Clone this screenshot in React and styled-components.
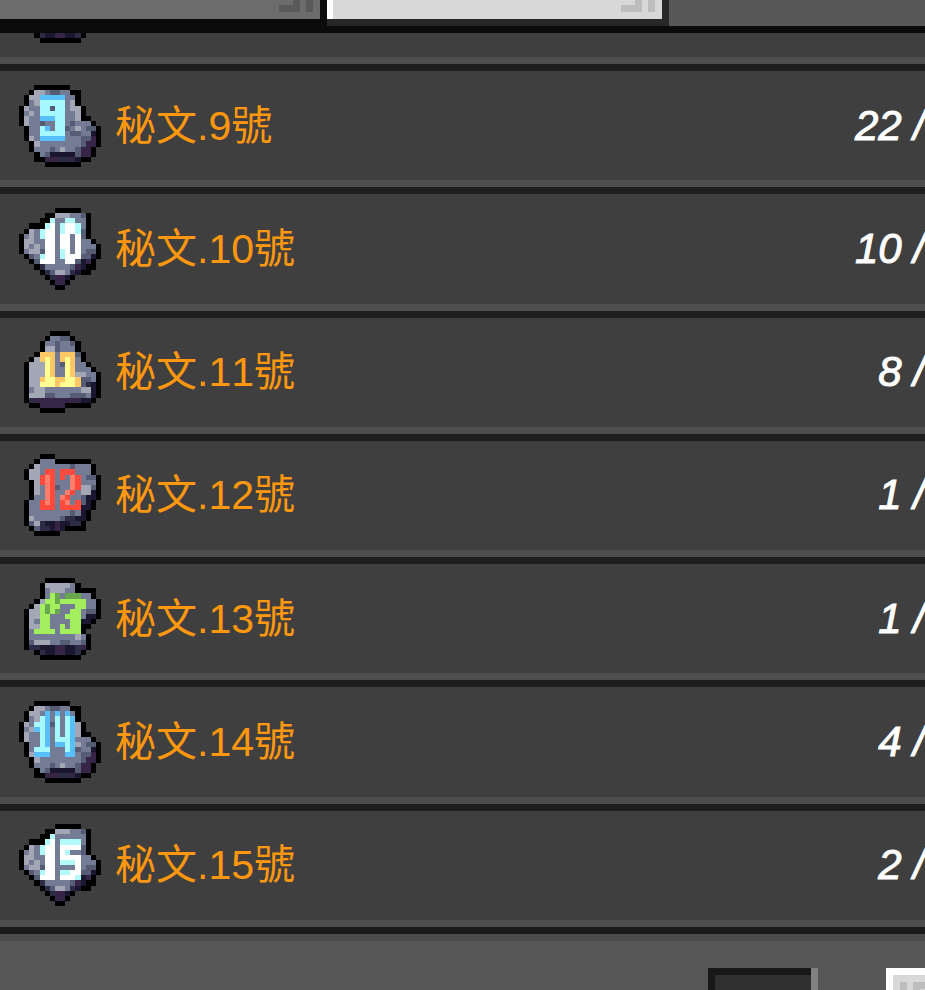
import React from "react";
import styled, { createGlobalStyle } from "styled-components";

const GlobalStyle = createGlobalStyle`
  * {
    box-sizing: border-box;
  }

  body {
    margin: 0;
    background: #575757;
    font-family: "Liberation Sans", "Noto Sans CJK TC", sans-serif;
    font-kerning: none;
  }
`;

const Page = styled.div`
  width: 100%;
  height: 100vh;
  display: flex;
  flex-direction: column;
  overflow: hidden;
`;

const TabBar = styled.div`
  flex: none;
  height: 33px;
  display: flex;
  align-items: flex-start;
  background: #585858;
  border-bottom: 7px solid #0b0b0b;
`;

const Tab = styled.button`
  flex: none;
  width: ${(props) => (props.$active ? "342px" : "327px")};
  height: 26px;
  padding: 0 7px 7px 0;
  display: flex;
  justify-content: flex-end;
  align-items: flex-end;
  border: solid ${(props) => (props.$active ? "#272727" : "#0b0b0b")};
  border-width: 0 7px 7px 0;
  background: ${(props) => (props.$active ? "#d8d8d8" : "#6c6c6c")};
  color: ${(props) => (props.$active ? "#bdbdbd" : "#595959")};
  box-shadow: ${(props) => (props.$active ? "inset 6px 0 #ffffff" : "none")};
`;

const List = styled.ul`
  flex: 1;
  min-height: 0;
  margin: 0;
  padding: 0;
  display: flex;
  flex-direction: column;
  list-style: none;
  background: #3f3f3f;
`;

const Peek = styled.li`
  flex: none;
  height: 24px;
  padding: 0 19px 14px;
  display: flex;
  align-items: flex-end;
  overflow: hidden;
`;

const Item = styled.li`
  flex: 1;
  padding: 7px 0 0 19px;
  display: flex;
  align-items: center;
  border-top: 7px solid #4e4e4e;
  box-shadow: inset 0 7px #1e1e1e;
`;

const Icon = styled.svg`
  flex: none;
  display: block;
  width: 82px;
  height: 82px;
`;

const Name = styled.span`
  flex: 1;
  margin-left: 14px;
  font-size: 41px;
  line-height: 56px;
  color: #ff980e;
`;

const Amount = styled.span`
  flex: none;
  font-size: 42px;
  line-height: 56px;
  font-style: italic;
  white-space: pre;
  color: #ffffff;
  -webkit-text-stroke: 1px #ffffff;
`;

const Footer = styled.footer`
  flex: none;
  height: 70px;
  padding-top: 41px;
  display: flex;
  justify-content: flex-end;
  gap: 68px;
  border-top: 7px solid #4e4e4e;
  box-shadow: inset 0 7px #1a1a1a, inset 0 14px #4b4b4b;
  overflow: hidden;
`;

const SearchInput = styled.input`
  width: 103px;
  height: 56px;
  flex: none;
  margin-right: 7px;
  border: solid #181818;
  border-width: 7px 0 7px 7px;
  border-radius: 0;
  background: #303030;
  color: #ffffff;
  box-shadow: 7px 0 #818181;
  outline: none;
`;

const FooterButton = styled.button`
  flex: none;
  width: 110px;
  height: 56px;
  margin-right: -71px;
  padding: 7px;
  display: flex;
  align-items: flex-start;
  border: 7px solid #ffffff;
  background: #d8d8d8;
  color: #bdbdbd;
`;

const COLORS = {
  K: "#000000",
  A: "#a3a7b5",
  m: "#737b95",
  d: "#565c73",
  s: "#2c2c45",
  n: "#1c1730",
  p: "#372548",
  B: "#57bffa",
  C: "#a6f8ff",
  W: "#ffffff",
  c: "#b2fafa",
  Y: "#ffff93",
  O: "#ffc766",
  R: "#ff4b3e",
  r: "#ff7d6b",
  G: "#a2ee5c",
  g: "#68a74d",
};

const STONES = {
  round: [
    "...KKKKKKK......",
    "..KAAmddmmKK....",
    ".KAAmmmmmmmK....",
    ".KmAmmmmmmAK....",
    "KAmmmmdmmmAAK...",
    "KmAmmmmmmmmAK...",
    "KAmmmmmmmmmAKK..",
    "KAmmdmmmmmdmmmK.",
    ".KmmmmmmmdmAmddK",
    ".KmmmmmmmmddmmnK",
    ".KAmmmmmmmmmddpK",
    "..KAmmmmmmmmdppK",
    "..KmmmdmAmmdppK.",
    "...KmdnnnnndppK.",
    "...KKpppsspnKK..",
    ".....KKKKKKK....",
  ],
  diamond: [
    ".......KKKKK....",
    ".....KKAAAmmdK..",
    "....KKmmmmmmmK..",
    "..KKKmdmmmmmmK..",
    ".KAmmmmmmmmmdK..",
    "KmAmdmmmmmmmdK..",
    "KAAmmmmmmmmmmmK.",
    "KAmAmmmmmmmmmmmK",
    "KmAAdmmmmmmmmddK",
    ".KdmmmmmmmmmddnK",
    "..KdmmmmmmmdnpK.",
    "...KsmmmmmdpnKK.",
    "....KsdAAmsnKK..",
    ".....KsppnK.....",
    "......KppK......",
    ".......KK.......",
  ],
  peak: [
    "......KKKK......",
    ".....KmmddK.....",
    "....KmmdmmdK....",
    "....KAAdmmmK....",
    "...KAAmmdmmdK...",
    "..KAAAAmdmmmK...",
    ".KAAAAAmdmmmmK..",
    ".KAAAmmmmmmmmmK.",
    ".KAAAmmmmmmAAmmK",
    ".KAAmmmmmmmmddmK",
    ".KAAmmmmmmmmdsnK",
    ".KmAAmmmmmmmAAnK",
    ".KAAAddmmmdddmnK",
    ".KspppppppppnnK.",
    "..KKpppppKKKKK..",
    "....KKKKK.......",
  ],
  slab: [
    "....KKK.........",
    "...KmmmKKKKKKK..",
    "..KAmmmmmmdmmmK.",
    ".KAAmmmmmmmmmmK.",
    ".KAAmmmmmmmmmddK",
    "..KAmmmmmmmmmmmK",
    "..KAmmmdmmmmAAdK",
    "..KAmmmmmmmmAAnK",
    "..KmmmmmmmmmdnnK",
    ".KmmmmmmmmmmdnK.",
    ".KmmmmmmmmmmnnK.",
    ".KmmmmmmmmdmnK..",
    ".KAmmmmmdssnnK..",
    ".KdAsnnpnnssK...",
    "..KdssnpnKKKK...",
    "...KKKKK........",
  ],
  boot: [
    ".....KKKKKK.....",
    "....KAAAAAmK....",
    "....KmAAAmmKKKK.",
    "....KmmAmmmmmmK.",
    "...KAAmmmmmmmmmK",
    "..KAAmmmmmmmmmmK",
    ".KAAmmmmmmmmmddK",
    ".KAAmmmmmmmmmnnK",
    ".KAmmmmmmmmmnnK.",
    ".KAAmmmmmmmmKK..",
    ".KmAmmmmmmmmK...",
    ".KmmmmmmmmmAmK..",
    ".KdAAAmmddmmdK..",
    ".KssnnnppnnspK..",
    "...KsnnppnnsK...",
    "....KKKKKKKK....",
  ],
};

// Digits are drawn over the stone, starting from the third row.
const DIGITS = {
  9: [
    "....BBBBB",
    "....CCCCC",
    "....CC.CC",
    "....CCCCC",
    "....BBBCC",
    ".......CC",
    "....CB.CC",
    "....CCCCC",
    "....BBBBB",
  ],
  10: [
    "......c..cc",
    ".....cW.cWWc",
    "....cWW.cWWc",
    "....cWW.WW.W",
    ".....WW.WW.W",
    ".....WW.WW.W",
    ".....WW.cW.W",
    "....cWW.cWWW",
    "....WWW..WW",
  ],
  11: [
    "",
    "",
    "....OOO.OOO",
    "....OYO.OYO",
    ".....YO..YO",
    ".....YO..YO",
    ".....YO..YO",
    "....OYYOOYYO",
    "....YYYOYYYO",
  ],
  12: [
    "",
    ".....RR.RRR",
    "....RrR.R.rR",
    "....RrR...rR",
    ".....rR...rR",
    ".....rR..rR",
    ".....rR.rR",
    "....RrR.Rr.R",
    "....RRR.RRRR",
  ],
  13: [
    "",
    "......Gg.ggg",
    ".....GGgGGGGG",
    "....GgGG...GG",
    "....GgGg..GG",
    "....GG...GGG",
    "....GG....GG",
    "....GG..G.GG",
    "...GGGG.GGGG",
  ],
  14: [
    ".....B.B.B",
    "....CB.C.CB",
    "...CCB.C.CB",
    "...BCB.C.CB",
    "....CB.C.CB",
    "....CB.CCCB",
    "....CB.BBCB",
    "...CCC...CB",
    "...BBB...BB",
  ],
  15: [
    "......c",
    ".....cW.cccc",
    "....cWW.WWWW",
    "....cWW.Wc",
    ".....WW.WWWW",
    ".....WW.cccW",
    ".....WW....W",
    "....cWW.ccWW",
    "....WWW.WWWc",
  ],
};

const RUNES = [
  { number: 9, stone: "round", amount: 22 },
  { number: 10, stone: "diamond", amount: 10 },
  { number: 11, stone: "peak", amount: 8 },
  { number: 12, stone: "slab", amount: 1 },
  { number: 13, stone: "boot", amount: 1 },
  { number: 14, stone: "round", amount: 4 },
  { number: 15, stone: "diamond", amount: 2 },
];

const renderPixels = (rows, top) =>
  rows.map((row, y) =>
    row
      .split("")
      .map((cell, x) =>
        cell === "." ? null : (
          <rect
            key={`${x}-${y}`}
            x={x}
            y={y + top}
            width="1"
            height="1"
            fill={COLORS[cell]}
          />
        )
      )
  );

const RuneIcon = ({ stone, number }) => (
  <Icon viewBox="0 0 16 16" shapeRendering="crispEdges" aria-hidden="true">
    <g>{renderPixels(STONES[stone], 0)}</g>
    {number && <g>{renderPixels(DIGITS[number], 2)}</g>}
  </Icon>
);

const TabCorner = () => (
  <svg width="34" height="12" viewBox="0 0 34 12" aria-hidden="true">
    <path d="M14 0h7v12H0V5h14zM27 0h7v12h-7z" fill="currentColor" />
  </svg>
);

const ButtonCorner = () => (
  <svg width="34" height="34" viewBox="0 0 34 34" aria-hidden="true">
    <path d="M0 0h7v34H0zM13 0h21v7H20v14h-7z" fill="currentColor" />
  </svg>
);

const App = () => (
  <>
    <GlobalStyle />
    <Page>
      <TabBar>
        <Tab type="button">
          <TabCorner />
        </Tab>
        <Tab type="button" $active>
          <TabCorner />
        </Tab>
      </TabBar>
      <List>
        <Peek>
          <RuneIcon stone="boot" />
        </Peek>
        {RUNES.map((rune) => (
          <Item key={rune.number}>
            <RuneIcon stone={rune.stone} number={rune.number} />
            <Name>{`秘文.${rune.number}號`}</Name>
            <Amount>{`${rune.amount} /`}</Amount>
          </Item>
        ))}
      </List>
      <Footer>
        <SearchInput type="text" />
        <FooterButton type="button">
          <ButtonCorner />
        </FooterButton>
      </Footer>
    </Page>
  </>
);

export default App;
